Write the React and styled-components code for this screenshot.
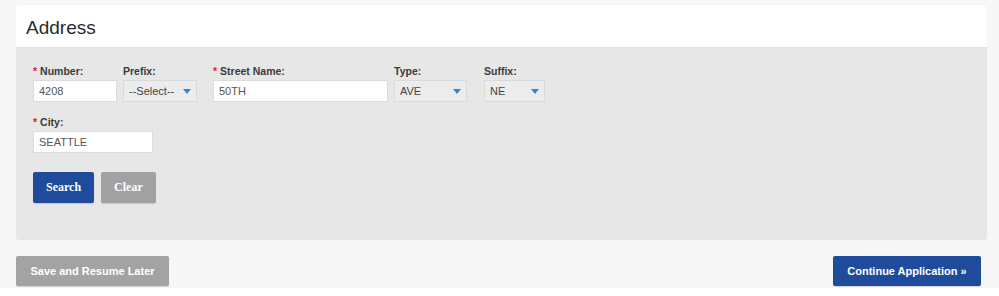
import styled, { createGlobalStyle } from "styled-components";

const GlobalStyle = createGlobalStyle`
  html, body {
    margin: 0;
    padding: 0;
    background: #ffffff;
  }
  body {
    font-family: "Liberation Sans", Arial, sans-serif;
  }
`;

const Field = ({ label, required, width, children }) => (
  <FieldBox width={width}>
    <Label>
      {required && <Star>*</Star>}
      {label}
    </Label>
    {children}
  </FieldBox>
);

const Select = ({ value, width }) => (
  <SelectBox width={width}>
    <span>{value}</span>
    <Arrow viewBox="0 0 8 5">
      <path d="M0 0 L8 0 L4 5 Z" fill="#2a8bd3" />
    </Arrow>
  </SelectBox>
);

const App = () => {
  return (
    <Page>
      <GlobalStyle />
      <Card>
        <Header>Address</Header>
        <Body>
          <Row>
            <Field label="Number:" required width={90}>
              <Input width={84} defaultValue="4208" />
            </Field>
            <Field label="Prefix:" width={90}>
              <Select value="--Select--" width={74} />
            </Field>
            <Field label="Street Name:" required width={181}>
              <Input width={175} defaultValue="50TH" />
            </Field>
            <Field label="Type:" width={90}>
              <Select value="AVE" width={73} />
            </Field>
            <Field label="Suffix:" width={70}>
              <Select value="NE" width={61} />
            </Field>
          </Row>
          <Row>
            <Field label="City:" required width={130}>
              <Input width={120} defaultValue="SEATTLE" />
            </Field>
          </Row>
          <Actions>
            <FormButton bg="#1f4b9d">Search</FormButton>
            <FormButton bg="#a2a2a2">Clear</FormButton>
          </Actions>
        </Body>
      </Card>
      <Footer>
        <NavButton bg="#a3a3a3" width={153}>
          Save and Resume Later
        </NavButton>
        <NavButton bg="#1f4b9d" width={148}>
          Continue Application »
        </NavButton>
      </Footer>
    </Page>
  );
};

export default App;

const Page = styled.div`
  height: 288px;
  box-sizing: border-box;
  background: #f7f7f7;
  padding: 5px 12px 0 16px;
`;

const Card = styled.div`
  border-radius: 4px;
  overflow: hidden;
  box-shadow: 0 0 1px rgba(0, 0, 0, 0.12);
`;

const Header = styled.div`
  height: 43px;
  background: #ffffff;
  display: flex;
  align-items: center;
  padding: 3px 0 0 10px;
  font-size: 19px;
  color: #2b2b2b;
  border-bottom: 1px solid #e3e3e3;
  box-sizing: border-box;
`;

const Body = styled.div`
  height: 192px;
  background: #e7e7e7;
  padding: 17px 0 0 17px;
  box-sizing: border-box;
`;

const Row = styled.div`
  display: flex;
  margin-bottom: 14px;
`;

const FieldBox = styled.div`
  width: ${({ width }) => width}px;
  display: flex;
  flex-direction: column;
`;

const Label = styled.div`
  font-size: 10.5px;
  line-height: 12px;
  font-weight: bold;
  color: #3a3a3a;
  margin-bottom: 3px;
  white-space: nowrap;
`;

const Star = styled.span`
  color: #d8232a;
  margin-right: 3px;
`;

const Input = styled.input`
  width: ${({ width }) => width}px;
  height: 22px;
  box-sizing: border-box;
  border: 1px solid #dcdcdc;
  background: #ffffff;
  padding: 0 5px;
  font-family: "Liberation Sans", Arial, sans-serif;
  font-size: 11px;
  color: #555;
  outline: none;
`;

const SelectBox = styled.div`
  width: ${({ width }) => width}px;
  height: 22px;
  box-sizing: border-box;
  border: 1px solid #dadada;
  background: #ececec;
  display: flex;
  align-items: center;
  justify-content: space-between;
  padding: 0 5px 0 5px;
  font-size: 11px;
  color: #444;
`;

const Arrow = styled.svg`
  width: 8px;
  height: 5px;
`;

const Actions = styled.div`
  display: flex;
  gap: 7px;
  margin-top: 19px;
`;

const FormButton = styled.button`
  height: 31px;
  padding: 0 13px;
  border: none;
  border-radius: 2px;
  background: ${({ bg }) => bg};
  color: #ffffff;
  font-family: "Liberation Serif", "Times New Roman", serif;
  font-weight: bold;
  font-size: 12px;
  box-shadow: 0 1px 1px rgba(0, 0, 0, 0.15);
`;

const Footer = styled.div`
  display: flex;
  justify-content: space-between;
  margin-top: 16px;
  padding-right: 6px;
`;

const NavButton = styled.button`
  width: ${({ width }) => width}px;
  height: 30px;
  border: none;
  border-radius: 2px;
  background: ${({ bg }) => bg};
  color: #ffffff;
  font-family: "Liberation Sans", Arial, sans-serif;
  font-weight: bold;
  font-size: 11px;
  box-shadow: 0 1px 1px rgba(0, 0, 0, 0.15);
`;
